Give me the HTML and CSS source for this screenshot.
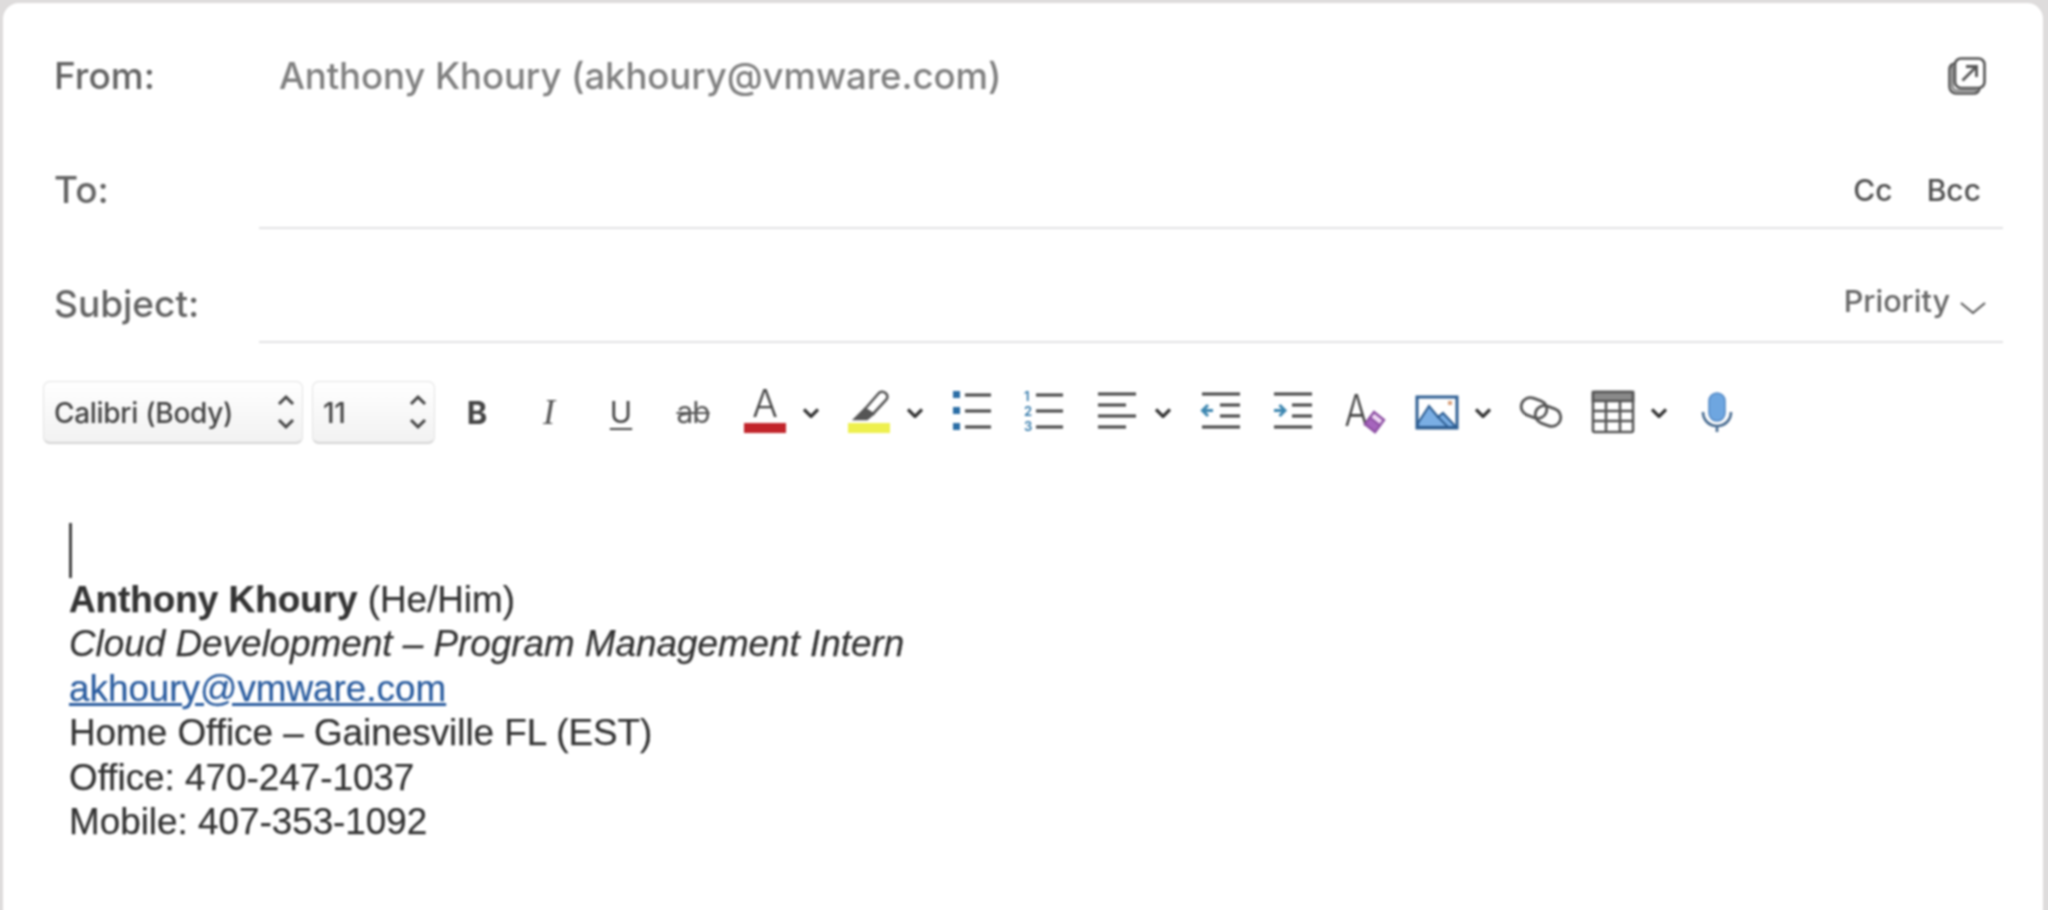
FILE: index.html
```html
<!DOCTYPE html>
<html lang="en">
<head>
<meta charset="utf-8">
<title>New message</title>
<link rel="stylesheet" href="styles.css">
</head>
<body>
<main class="card">
  <div class="row">
    <div class="label">From:</div>
    <div class="field field-plain">
      <span class="from-value">Anthony Khoury (akhoury@vmware.com)</span>
      <svg class="popout" viewBox="0 0 38 38" width="38" height="38" fill="none" stroke="#555" stroke-width="2.600">
        <rect x="7" y="1.500" width="29.500" height="29.500" rx="6"/>
        <path d="M7 6.500C3.500 7 1.500 9.500 1.500 12.500v17c0 4 3 7 7 7h17c3 0 5.500-2 6-5"/>
        <path d="M4.500 9v20c0 2.500 2 4.500 4.500 4.500h20" stroke-width="1.600"/>
        <path d="M14.500 23.500L28 10M18 9.500h10.500V20" stroke-width="2.800"/>
      </svg>
    </div>
  </div>
  <div class="row">
    <div class="label">To:</div>
    <div class="field">
      <span class="spacer"></span>
      <span class="cc">Cc</span>
      <span class="cc">Bcc</span>
    </div>
  </div>
  <div class="row">
    <div class="label">Subject:</div>
    <div class="field">
      <span class="spacer"></span>
      <span class="priority">Priority</span>
      <svg class="priority-chev" viewBox="0 0 26 14" width="26" height="14" fill="none" stroke="#555" stroke-width="2"><path d="M1 2l12 10L25 2"/></svg>
    </div>
  </div>

  <div class="toolbar">
    <div class="select select-font">
      <span>Calibri (Body)</span>
      <svg class="stepper" viewBox="0 0 20 38" width="20" height="38" fill="none" stroke="#444" stroke-width="3"><path d="M3 11l7-7 7 7M3 27l7 7 7-7"/></svg>
    </div>
    <div class="select select-size">
      <span>11</span>
      <svg class="stepper" viewBox="0 0 20 38" width="20" height="38" fill="none" stroke="#444" stroke-width="3"><path d="M3 11l7-7 7 7M3 27l7 7 7-7"/></svg>
    </div>
    <div class="tools">
      <span class="tool t-bold">B</span>
      <span class="tool t-italic">I</span>
      <span class="tool t-under">U</span>
      <span class="tool t-strike">ab</span>
      <div class="drop">
        <div class="tool t-color"><span class="t-letter">A</span><i class="swatch swatch-red"></i></div>
        <svg class="chev" viewBox="0 0 16 10" width="16" height="10" fill="none" stroke="#333" stroke-width="3.200"><path d="M1 1.500l7 7 7-7"/></svg>
      </div>
      <div class="drop">
        <div class="tool t-color">
          <svg class="marker" viewBox="0 0 44 32" width="44" height="32" fill="none" stroke="#555" stroke-width="2.600">
            <path d="M18 19L31 4c2-2.500 5-3 7.500-1s2.500 4.500.5 7L26 24z"/>
            <path d="M18 19l8 5-6 5H8z" fill="#555"/>
          </svg>
          <i class="swatch swatch-yellow"></i>
        </div>
        <svg class="chev" viewBox="0 0 16 10" width="16" height="10" fill="none" stroke="#333" stroke-width="3.200"><path d="M1 1.500l7 7 7-7"/></svg>
      </div>
      <svg class="icon" viewBox="0 0 44 44" width="44" height="44" fill="none" stroke="#444" stroke-width="3">
        <path d="M2 1h7v7H2zM2 17h7v7H2zM2 33h7v7H2z" fill="#2b6ea6" stroke="none"/>
        <path d="M14 5h26M14 21h26M14 37h26"/>
      </svg>
      <svg class="icon" viewBox="0 0 44 44" width="44" height="44" fill="none" stroke="#444" stroke-width="3">
        <text class="num" x="1" y="11">1</text>
        <text class="num" x="1" y="26">2</text>
        <text class="num" x="1" y="41">3</text>
        <path d="M13 5h27M13 21h27M13 37h27"/>
      </svg>
      <div class="drop">
        <svg class="icon" viewBox="0 0 44 44" width="44" height="44" fill="none" stroke="#444" stroke-width="3">
          <path d="M3 4h38M3 15h28M3 26h38M3 37h28"/>
        </svg>
        <svg class="chev" viewBox="0 0 16 10" width="16" height="10" fill="none" stroke="#333" stroke-width="3.200"><path d="M1 1.500l7 7 7-7"/></svg>
      </div>
      <svg class="icon" viewBox="0 0 44 44" width="44" height="44" fill="none" stroke="#444" stroke-width="3">
        <path d="M3 4h38M3 37h38M21 15h20M21 26h20"/>
        <path d="M14 20.500H4M9 15l-5.500 5.500L9 26" stroke="#3c86b0"/>
      </svg>
      <svg class="icon" viewBox="0 0 44 44" width="44" height="44" fill="none" stroke="#444" stroke-width="3">
        <path d="M3 4h38M3 37h38M21 15h20M21 26h20"/>
        <path d="M3 20.500h10M8.500 15l5.500 5.500L8.500 26" stroke="#3c86b0"/>
      </svg>
      <svg class="icon" viewBox="0 0 44 44" width="44" height="44" fill="none">
        <text class="aer" x="2" y="36" transform="scale(.8 1)">A</text>
        <path d="M22 34l9-12 10 8-9 12z" fill="#efd8f4" stroke="#8d4fa3" stroke-width="2.400"/>
        <path d="M22 34l5-6.500 10 8-5 6.500z" fill="#a665bd" stroke="#8d4fa3" stroke-width="2"/>
      </svg>
      <div class="drop">
        <svg class="icon" viewBox="0 0 44 44" width="44" height="44" fill="none">
          <rect x="2" y="7" width="40" height="31" fill="#fff" stroke="#2f5f93" stroke-width="3"/>
          <path d="M3 37V33l11-17 9 11 5-4 13 14z" fill="#7aaee4" stroke="#2f5f93" stroke-width="2.200"/>
          <path d="M22 26l11 11" stroke="#2f5f93" stroke-width="2"/>
          <rect x="33" y="11" width="4" height="4" fill="#d9a27e"/>
        </svg>
        <svg class="chev" viewBox="0 0 16 10" width="16" height="10" fill="none" stroke="#333" stroke-width="3.200"><path d="M1 1.500l7 7 7-7"/></svg>
      </div>
      <svg class="icon" viewBox="0 0 44 44" width="44" height="44" fill="none" stroke="#555" stroke-width="2.800">
        <rect x="2" y="9" width="26" height="18" rx="9" transform="rotate(20 15 18)"/>
        <rect x="16" y="17" width="26" height="18" rx="9" transform="rotate(20 29 26)"/>
      </svg>
      <div class="drop">
        <svg class="icon" viewBox="0 0 44 44" width="44" height="44" fill="none" stroke="#555" stroke-width="2.600">
          <rect x="2" y="2" width="40" height="40" rx="1.500"/>
          <path d="M2 2h40v9H2z" fill="#8a8a8a"/>
          <path d="M2 21h40M2 31h40M15 11v31M29 11v31"/>
        </svg>
        <svg class="chev" viewBox="0 0 16 10" width="16" height="10" fill="none" stroke="#333" stroke-width="3.200"><path d="M1 1.500l7 7 7-7"/></svg>
      </div>
      <svg class="icon" viewBox="0 0 44 44" width="44" height="44" fill="none">
        <rect x="14" y="3" width="16" height="28" rx="8" fill="#6ea6e0" stroke="#4f86c4" stroke-width="1.500"/>
        <path d="M8 22c0 8 6 14 14 14s14-6 14-14M22 36v6" stroke="#44688e" stroke-width="2.600"/>
      </svg>
    </div>
  </div>

  <div class="message">
    <div class="caret"></div>
    <div class="sig"><b>Anthony Khoury</b> (He/Him)</div>
    <div class="sig"><em>Cloud Development – Program Management Intern</em></div>
    <div class="sig"><a class="mail" href="#">akhoury@vmware.com</a></div>
    <div class="sig">Home Office – Gainesville FL (EST)</div>
    <div class="sig">Office: 470-247-1037</div>
    <div class="sig">Mobile: 407-353-1092</div>
  </div>
</main>
</body>
</html>
```
FILE: styles.css
```css
* { box-sizing: border-box; }
html, body { margin: 0; height: 910px; overflow: hidden; }
body {
  background: #dedcdc;
  padding: 3px 5px 0 3px;
  font-family: Inter, "Liberation Sans", sans-serif;
}
.card {
  background: #fff;
  height: 920px;
  border-radius: 16px 16px 0 0;
  padding: 35px 40px 0 51px;
  filter: blur(0.8px);
}
.row {
  display: flex;
  height: 77px;
  margin-bottom: 37px;
}
.label {
  width: 205px;
  flex: none;
  font-size: 37px;
  font-weight: 450;
  line-height: 76px;
  color: #636363;
}
.field {
  flex: 1;
  display: flex;
  align-items: center;
  border-bottom: 2px solid #e2e2e4;
  padding-right: 17px;
}
.field-plain { border-bottom-color: transparent; }
.spacer { flex: 1; }
.from-value {
  flex: 1;
  padding-left: 20px;
  font-size: 36.600px;
  font-weight: 450;
  letter-spacing: -0.1px;
  color: #808080;
}
.cc {
  font-size: 30px;
  font-weight: 500;
  color: #505050;
  margin-left: 34px;
  position: relative;
  left: -5px;
}
.priority {
  font-size: 30.500px;
  font-weight: 500;
  color: #666;
  margin: -6px 10px 0 0;
}
.priority-chev { margin-top: 8px; }
.popout { flex: none; }
.toolbar {
  display: flex;
  align-items: center;
  margin: 0 0 0 -11px;
  height: 64px;
}
.select {
  display: flex;
  align-items: center;
  justify-content: space-between;
  height: 63px;
  padding: 0 6px 0 10px;
  border: 1px solid #e2e2e2;
  border-bottom: 2px solid #d4d4d4;
  border-radius: 7px;
  background: linear-gradient(#fff, #f2f2f2);
  font-size: 28px;
  font-weight: 500;
  color: #444;
  letter-spacing: -0.3px;
}
.select span { padding-top: 3px; }
.select-font { width: 260px; }
.select-size { width: 123px; margin-left: 9px; }
.tools {
  display: flex;
  align-items: center;
  gap: 28px;
  margin-left: 20px;
}
.drop {
  display: flex;
  align-items: center;
  gap: 16px;
}
.chev { flex: none; margin-top: 2px; }
.icon { flex: none; display: block; overflow: visible; }
.tool {
  width: 44px;
  flex: none;
  text-align: center;
  color: #444;
}
.t-bold { font-size: 31px; font-weight: 700; }
.t-italic { font-family: "Liberation Serif", serif; font-style: italic; font-size: 36px; color: #555; }
.t-under { font-size: 30px; font-weight: 400; text-decoration: underline; text-underline-offset: 5px; text-decoration-thickness: 2px; }
.t-strike { font-size: 30px; font-weight: 400; letter-spacing: -1px; text-decoration: line-through; text-decoration-thickness: 2px; color: #555; }
.t-color {
  display: flex;
  flex-direction: column;
  align-items: center;
  height: 44px;
}
.t-letter {
  display: flex;
  align-items: flex-end;
  height: 32px;
  font-size: 38px;
  font-weight: 300;
  line-height: 38px;
}
.marker { flex: none; display: block; }
.swatch { display: block; width: 42px; height: 10px; flex: none; margin-top: 1px; }
.swatch-red { background: #c2252b; }
.swatch-yellow { background: #eef04e; }
.num { font: 600 13px Inter, sans-serif; fill: #2f76a8; stroke: none; }
.aer { font: 300 44px Inter, sans-serif; fill: #444; }
.message { margin: 79px 0 0 15px; }
.caret { width: 3px; height: 55px; background: #444; }
.sig {
  font-family: "Liberation Sans", Arial, sans-serif;
  font-size: 36.850px;
  line-height: 44.400px;
  color: #333;
  white-space: nowrap;
  -webkit-text-stroke: 0.25px #333;
}
.mail { color: #2a5c9f; -webkit-text-stroke-color: #2a5c9f; text-decoration: underline; }
```
